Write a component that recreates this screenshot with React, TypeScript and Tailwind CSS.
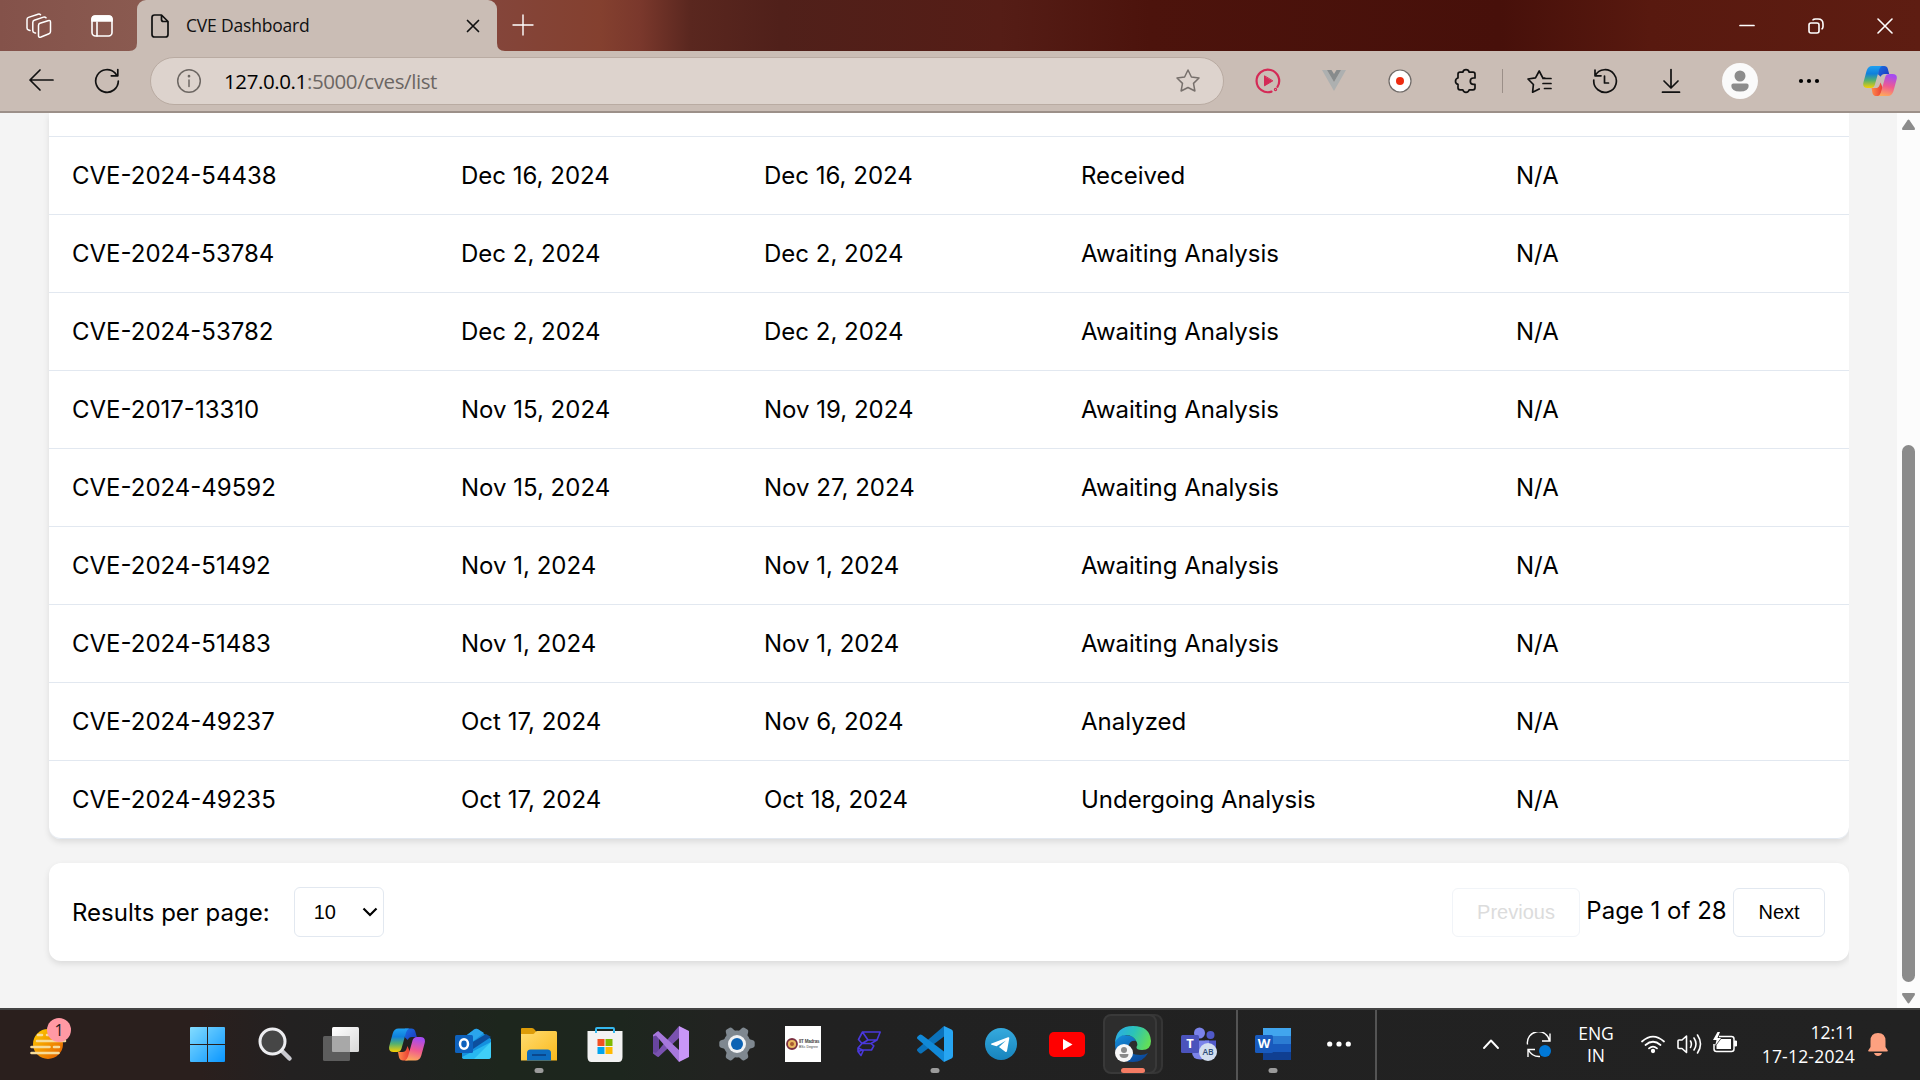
import React from "react";

type P = { children?: React.ReactNode; className?: string };

const rows = [
  ["CVE-2024-54438", "Dec 16, 2024", "Dec 16, 2024", "Received", "N/A"],
  ["CVE-2024-53784", "Dec 2, 2024", "Dec 2, 2024", "Awaiting Analysis", "N/A"],
  ["CVE-2024-53782", "Dec 2, 2024", "Dec 2, 2024", "Awaiting Analysis", "N/A"],
  ["CVE-2017-13310", "Nov 15, 2024", "Nov 19, 2024", "Awaiting Analysis", "N/A"],
  ["CVE-2024-49592", "Nov 15, 2024", "Nov 27, 2024", "Awaiting Analysis", "N/A"],
  ["CVE-2024-51492", "Nov 1, 2024", "Nov 1, 2024", "Awaiting Analysis", "N/A"],
  ["CVE-2024-51483", "Nov 1, 2024", "Nov 1, 2024", "Awaiting Analysis", "N/A"],
  ["CVE-2024-49237", "Oct 17, 2024", "Nov 6, 2024", "Analyzed", "N/A"],
  ["CVE-2024-49235", "Oct 17, 2024", "Oct 18, 2024", "Undergoing Analysis", "N/A"],
];

function Slot({ children, className = "w-[66px]" }: P) {
  return <div className={`flex h-full shrink-0 items-center justify-center ${className}`}>{children}</div>;
}

function Line({ size = 24, children, stroke = "#111", sw = 1.6, className = "" }: { size?: number; children: React.ReactNode; stroke?: string; sw?: number; className?: string }) {
  return (
    <svg width={size} height={size} viewBox={`0 0 ${size} ${size}`} fill="none" stroke={stroke} strokeWidth={sw} strokeLinecap="round" strokeLinejoin="round" className={className}>
      {children}
    </svg>
  );
}

function Copilot({ id, w, h }: { id: string; w: number; h: number }) {
  return (
    <svg width={w} height={h} viewBox="0 0 36 32">
      <defs>
        <linearGradient id={id + "a"} x1="0" y1="0" x2="0" y2="1">
          <stop offset="0" stopColor="#1fa0f0" />
          <stop offset=".35" stopColor="#0f80dc" />
          <stop offset=".65" stopColor="#54b070" />
          <stop offset="1" stopColor="#f8d000" />
        </linearGradient>
        <linearGradient id={id + "b"} x1="0.3" y1="0" x2="0.1" y2="1">
          <stop offset="0" stopColor="#a64cf0" />
          <stop offset=".5" stopColor="#f05a90" />
          <stop offset="1" stopColor="#ffb056" />
        </linearGradient>
        <linearGradient id={id + "c"} x1="0" y1="0" x2="1" y2="1">
          <stop offset="0" stopColor="#1a70e0" />
          <stop offset="1" stopColor="#1c35c0" />
        </linearGradient>
        <linearGradient id={id + "d"} x1="0" y1="0" x2="1" y2="0">
          <stop offset="0" stopColor="#ff8a4a" />
          <stop offset="1" stopColor="#e83a34" />
        </linearGradient>
      </defs>
      <path d="M16 0h6.500q3 0 3.800 3l1.500 5.500h-5q-3 0-4 3L16 9z" fill={`url(#${id}c)`} />
      <path d="M9 23.500h4.500q3 0 4-3l1-3 2.500 6-2.500 8.500H14q-3 0-4-3z" fill={`url(#${id}d)`} />
      <path d="M9.500 0H20q-2 1-3 4l-4.500 16q-1 3.500-4.500 3.500H4.500Q-1 23.500.3 17.500L3.700 5Q5.200 0 9.500 0z" fill={`url(#${id}a)`} />
      <path d="M26.500 32H16q2-1 3-4l4.500-16q1-3.500 4.500-3.500h3.500q5.500 0 4.200 6L32.300 27q-1.500 5-5.800 5z" fill={`url(#${id}b)`} />
    </svg>
  );
}

function TitleBar() {
  return (
    <div className="flex h-[51px] shrink-0 bg-[linear-gradient(90deg,#84524a_0px,#8a5a50_137px,#84453a_497px,#84402f_600px,#7a382c_640px,#5a271f_690px,#50201a_780px,#551d16_1000px,#4c130c_1150px,#47100a_1500px,#58190f_1650px,#5e1d12_1920px)]">
      <div className="flex w-[137px] items-center pl-[7px]">
        <Slot className="w-[64px]">
          <Line size={26} stroke="#fff" sw={1.5}>
            <path d="M12.500 12.500q0-1.600 1.500-2.200l8-2.600q2.500-.7 2.500 1.500v9.300q0 1.600-1.500 2.200l-8 3.300q-2.500.9-2.500-1.300z" />
            <path d="M9.500 20l-1-.2q-1.700-.4-1.700-2V9.500q0-1.600 1.500-2.200l9.200-3.200q1.500-.5 2.500.7" />
            <path d="M4 17.500l-1.500-.5Q1 16.500 1 15V6.500Q1 5 2.500 4.400L12 1.200q1.500-.5 2.500.5" />
          </Line>
        </Slot>
        <Slot className="w-[62px]">
          <Line size={24} stroke="#fff" sw={1.6}>
            <rect x="2" y="2" width="20" height="20" rx="3.500" />
            <path d="M2 7V5q0-3 3-3h14q3 0 3 3v2z" fill="#fff" />
            <path d="M7 8v14" />
          </Line>
        </Slot>
      </div>
      <div className="relative flex w-[360px] items-center rounded-t-[9px] bg-[#cabdb5] pl-[14px] pr-[16px]">
        <svg className="absolute -left-[8px] bottom-0" width="8" height="8"><path d="M8 0v8H0q8 0 8-8z" fill="#cabdb5" /></svg>
        <svg className="absolute -right-[8px] bottom-0" width="8" height="8"><path d="M0 0v8h8Q0 8 0 0z" fill="#cabdb5" /></svg>
        <svg width="18" height="24" viewBox="0 0 18 24" fill="none" stroke="#111" strokeWidth="1.7" strokeLinejoin="round" className="mt-px">
          <path d="M3.500 1h7L17 7.500v13q0 2.500-2.500 2.500h-11Q1 23 1 20.500v-17Q1 1 3.500 1zM10.500 1v4.500q0 2 2 2H17" />
        </svg>
        <span className="ml-[17px] flex-1 whitespace-nowrap font-['Open_Sans'] text-[17.500px] tracking-[-0.190px] text-[#111]">CVE Dashboard</span>
        <Line size={16} sw={1.7}><path d="M2.500 2.500l11 11M13.500 2.500l-11 11" /></Line>
      </div>
      <Slot className="w-[52px]"><Line size={22} stroke="#fff" sw={1.4} className="-mt-px"><path d="M11 1v20M1 11h20" /></Line></Slot>
      <div className="flex-1" />
      <Slot className="w-[69px]"><Line size={16} stroke="#fff" sw={1.7}><path d="M1 7.500h14" /></Line></Slot>
      <Slot className="w-[69px]">
        <Line size={16} stroke="#fff" sw={1.6}>
          <rect x="1" y="5" width="10" height="10" rx="2" />
          <path d="M5 1.800Q5.500 1 7.500 1h2.500q5 0 5 5v2.500q0 1.500-1 2.300" />
        </Line>
      </Slot>
      <Slot className="mr-px w-[69px]"><Line size={16} stroke="#fff" sw={1.6}><path d="M1 1l14 14M15 1L1 15" /></Line></Slot>
    </div>
  );
}

function Toolbar() {
  return (
    <div className="flex h-[62px] shrink-0 items-center border-b-2 border-[#9c9089] bg-[#cabdb5] pl-[8px]">
      <Slot><Line size={26} sw={1.7}><path d="M25 12H2M12 2L2 12l10 10" /></Line></Slot>
      <Slot><Line size={26} sw={1.7}><path d="M24.300 13a11.300 11.300 0 1 1-3.100-7.800L23 7.500M23.800 1.500v6.300h-6.500" /></Line></Slot>
      <div className="ml-[10px] flex h-[48px] w-[1074px] shrink-0 items-center rounded-full border border-[#b9aba2] bg-[#ddd3cd] pl-[25px] pr-[22px]">
        <Line size={26} stroke="#6d6763" sw={1.5}><circle cx="13" cy="13" r="11.300" /><path d="M13 12v6.500" /><circle cx="13" cy="8.200" r=".6" fill="#6d6763" /></Line>
        <span className="ml-[22px] flex-1 whitespace-nowrap font-['Open_Sans'] text-[20.500px] tracking-[-0.400px] text-[#6b6663]"><span className="text-black">127.0.0.1</span>:5000/cves/list</span>
        <Line size={26} stroke="#77706c" sw={1.5}><path d="M13 2l3.400 7 7.600 1-5.500 5.400 1.400 7.600-6.900-3.500L6.100 23l1.400-7.600L2 10l7.600-1z" /></Line>
      </div>
      <div className="w-[11px]" />
      <Slot>
        <Line size={26} stroke="#d42a56" sw={2.2}>
          <path d="M16.500 23.600A11.300 11.300 0 1 1 22.500 18.800" />
          <circle cx="20.500" cy="21.500" r=".6" />
          <path d="M9.500 8.200v9.600l8-4.800z" fill="#d42a56" strokeWidth="1" />
        </Line>
      </Slot>
      <Slot>
        <svg width="24" height="22" viewBox="0 0 24 22"><path d="M0 0h5l7 12 7-12h5L12 21z" fill="#adb0b0" /><path d="M5 0h4.500L12 4l2.500-4H19l-7 12z" fill="#878b8c" /></svg>
      </Slot>
      <Slot>
        <svg width="24" height="24"><circle cx="12" cy="12" r="11" fill="#fff" stroke="#6f6a67" strokeWidth="1.200" /><circle cx="12" cy="12" r="4" fill="#ee2b10" /></svg>
      </Slot>
      <Slot>
        <Line size={26} sw={1.7}>
          <path d="M7 4.200h2.800a3.300 3.300 0 0 1 6.400 0H20q2 0 2 2V10h-1.500a3.200 3.200 0 0 0 0 6.400H22v3.400q0 2-2 2h-3.800a3.300 3.300 0 0 1-6.400 0H7q-2 0-2-2V16.400a3.300 3.300 0 0 1 0-6.400V6.200q0-2 2-2z" />
        </Line>
      </Slot>
      <Slot className="w-[7px]"><div className="h-6 w-[1.500px] bg-[#9b8f88]" /></Slot>
      <Slot className="-ml-px w-[67px]">
        <Line size={26} sw={1.7}>
          <path d="M13.200 21L6.600 24.200l.8-7.700L2 11l7.500-1.200L13.200 3l3.600 6.800 2 .3M17 10.500h8M17 15.500h8M18.500 20.500H25" />
        </Line>
      </Slot>
      <Slot>
        <Line size={26} sw={1.700}>
          <path d="M3 2v5.800h6M3.200 7.500A11.300 11.300 0 1 1 1.800 12M12.500 8v7h4" />
        </Line>
      </Slot>
      <Slot><Line size={26} sw={1.7}><path d="M13 1.500v18M6 13l7 7 7-7M4.500 24.200h17" /></Line></Slot>
      <Slot className="w-[72px]">
        <svg width="36" height="36"><circle cx="18" cy="18" r="18" fill="#fafafa" /><circle cx="18" cy="13" r="5.500" fill="#8c8c8c" /><path d="M11.500 20.500h13q2.200 0 2.200 2.200 0 5.800-8.700 5.800t-8.700-5.800q0-2.200 2.200-2.200z" fill="#8c8c8c" /></svg>
      </Slot>
      <Slot><svg width="22" height="6"><circle cx="3" cy="3" r="2.100" /><circle cx="11" cy="3" r="2.100" /><circle cx="19" cy="3" r="2.100" /></svg></Slot>
      <Slot className="w-[76px]"><Copilot id="tc" w={34} h={30} /></Slot>
    </div>
  );
}

function Content() {
  return (
    <div className="flex h-[895px] shrink-0 bg-[#f4f4f4] font-['Inter'] text-2xl text-black">
      <div className="w-[1849px] overflow-hidden pl-[49px] [clip-path:inset(0_-10px_0_0)]">
        <div className="h-[726px] rounded-b-xl bg-white shadow-[0_3px_6px_rgba(0,0,0,0.1)]">
          <div className="h-6 border-b border-[#e2e8f0]" />
          {rows.map((r) => (
            <div key={r[0]} className="grid h-[78px] grid-cols-[388px_303px_317px_435px_357px] items-center whitespace-nowrap border-b border-[#e2e8f0] pt-px last:rounded-b-xl">
              {r.map((c, i) => <div key={i} className="pl-6 first:pl-[23px]">{c}</div>)}
            </div>
          ))}
        </div>
        <div className="mt-6 flex h-[98px] items-center justify-between rounded-xl bg-white pl-[23px] pr-6 shadow-[0_3px_6px_rgba(0,0,0,0.1)]">
          <div className="flex items-center">
            <span className="mt-px">Results per page:</span>
            <div className="ml-6 flex h-[50px] w-[90px] items-center justify-between rounded-md border border-[#e2e8f0] pl-[19px] pr-[5px] font-['Liberation_Sans'] text-xl">
              <span>10</span>
              <svg width="16" height="10" viewBox="0 0 16 10" fill="none" stroke="#000" strokeWidth="2.200"><path d="M1.500 1.500L8 8l6.500-6.500" /></svg>
            </div>
          </div>
          <div className="flex items-center">
            <div className="mt-px flex h-[49px] w-[128px] items-center justify-center rounded-md border border-[#f1f4f8] pb-px font-['Liberation_Sans'] text-xl text-[#dcdcdc]">Previous</div>
            <span className="-mt-[3px] w-[153px] text-center">Page 1 of 28</span>
            <div className="mt-px flex h-[49px] w-[92px] items-center justify-center rounded-md border border-[#e2e8f0] pb-px font-['Liberation_Sans'] text-xl">Next</div>
          </div>
        </div>
      </div>
      <div className="w-[48px]" />
      <div className="flex w-[23px] flex-col items-center bg-[#fcfcfc] pr-px pt-[6px]">
        <svg width="15" height="12" viewBox="0 0 15 12"><path d="M6.500 1.200q1-1.200 2 0l5.300 7.800q.8 2-.8 2H2q-1.600 0-.8-2z" fill="#8b8b8b" /></svg>
        <div className="mt-[314px] h-[537px] w-[13px] rounded-full bg-[#8b8b8b]" />
        <svg className="mt-[10px]" width="15" height="12" viewBox="0 0 15 12"><path d="M6.500 10.800q1 1.200 2 0L13.800 3q.8-2-.8-2H2Q.4 1 1.200 3z" fill="#8b8b8b" /></svg>
      </div>
    </div>
  );
}

function AppIcon({ children, running, className = "w-[66px]" }: P & { running?: boolean }) {
  return (
    <div className={`relative flex h-full shrink-0 items-center justify-center pb-[2px] ${className}`}>
      {children}
      {running && <div className="absolute bottom-[7px] left-1/2 h-[5px] w-[9px] -translate-x-1/2 rounded-full bg-[#9b9b9b]" />}
    </div>
  );
}

function Taskbar() {
  return (
    <div className="flex h-[72px] shrink-0 border-t-2 border-[#444443] bg-[linear-gradient(90deg,#2a1f1d_0px,#2a1f1d_200px,#232121_290px,#212221_400px,#1d261d_500px,#1d261e_620px,#222321_720px,#212121_800px,#222222_1920px)] text-white">
      <div className="w-[174px] pl-[29px] pt-[7px]">
        <div className="relative h-[44px] w-[44px]">
          <svg width="44" height="44" viewBox="0 0 44 44">
            <defs><linearGradient id="sun" x1="0" y1="0" x2="1" y2="1"><stop offset="0" stopColor="#ffd000" /><stop offset="1" stopColor="#e45a00" /></linearGradient></defs>
            <circle cx="19" cy="27" r="15" fill="url(#sun)" />
            <g stroke="#f7dc9a" strokeWidth="2.600" strokeLinecap="round"><path d="M9 18h4M18 18h10M8 24h28M2.500 30h18M25 30h5M2.500 36h27" /></g>
          </svg>
          <div className="absolute left-[18px] top-[1px] flex h-6 w-6 items-center justify-center rounded-full bg-[#ff99a4] font-['Open_Sans'] text-base text-[#1b1b1b]">1</div>
        </div>
      </div>
      <AppIcon className="w-[68px] pr-[2px]">
        <svg width="35" height="35" className="mt-px">
          <defs><linearGradient id="win" x1="0" y1="0" x2="1" y2="1"><stop offset="0" stopColor="#83dcff" /><stop offset="1" stopColor="#0a96ff" /></linearGradient></defs>
          <path d="M1 0h16v17H0V1q0-1 1-1zM18 0h16q1 0 1 1v16H18zM0 18h17v17H1q-1 0-1-1zM18 18h17v16q0 1-1 1H18z" fill="url(#win)" />
        </svg>
      </AppIcon>
      <AppIcon>
        <svg width="36" height="36" viewBox="0 0 36 36"><path d="M24.500 24.500l8 8" stroke="#c9c9cf" strokeWidth="4.500" strokeLinecap="round" /><circle cx="15.500" cy="15.500" r="12.500" fill="#464646" stroke="#ededf0" strokeWidth="3" /></svg>
      </AppIcon>
      <AppIcon>
        <svg width="36" height="36" viewBox="0 0 36 36">
          <defs><linearGradient id="tv" x1="0" y1="0" x2="1" y2="1"><stop offset="0" stopColor="#fff" /><stop offset="1" stopColor="#d8d8d8" /></linearGradient></defs>
          <rect x="9" y="1" width="27" height="25" rx="1.500" fill="url(#tv)" /><rect x="0" y="10" width="27" height="25" rx="1.500" fill="#727272" fillOpacity=".75" /><path d="M9 10h18v16H10.500q-1.500 0-1.500-1.500z" fill="#a8a8a8" />
        </svg>
      </AppIcon>
      <AppIcon><Copilot id="bc" w={36} h={33} /></AppIcon>
      <AppIcon>
        <svg width="36" height="34" viewBox="0 0 36 34">
          <path d="M7 12L19 2.500q2-1.300 4 0L36 12v17q0 3-3 3H10q-3 0-3-3z" fill="#1490df" />
          <path d="M9 10l10.500-7.500q2-1.300 4 0L29 6 13 18z" fill="#2aa5ec" /><path d="M36 10L18 22l-2-6L31 7z" fill="#0d4f9e" />
          <path d="M36 15v14q0 3-3 3H9q-2 0-2-2z" fill="#28b8f0" /><path d="M36 15v14q0 3-3 3H19z" fill="#48d8fb" opacity=".7" />
          <rect x="0" y="8" width="18" height="18" rx="1.500" fill="#0e62bd" /><ellipse cx="9" cy="17" rx="4" ry="4.700" fill="none" stroke="#fff" strokeWidth="2.500" />
        </svg>
      </AppIcon>
      <AppIcon running>
        <svg width="36" height="36" viewBox="0 0 36 36">
          <defs><linearGradient id="fd" x1="0" y1="0" x2="1" y2="1"><stop offset="0" stopColor="#ffdc70" /><stop offset="1" stopColor="#fbb91c" /></linearGradient></defs>
          <path d="M0 3q0-1 1-1h10q1.500 0 3 2l1.500 2v7H0z" fill="#dd9c08" /><path d="M0 8h12q1 0 2-1.500T16 5h18.500Q36 5 36 6.500V34.500H0z" fill="url(#fd)" />
          <path d="M6 34.500v-7.500q0-3.500 3.500-3.500h17q3.500 0 3.500 3.500v7.500z" fill="#0d6cbf" /><path d="M11 29h14" stroke="#0a478d" strokeWidth="2" />
        </svg>
      </AppIcon>
      <AppIcon>
        <svg width="36" height="36" viewBox="0 0 36 36"><path d="M9 9V3q0-1 1-1h16q1 0 1 1v6" fill="none" stroke="#35b8ee" strokeWidth="2" /><path d="M.500 5h35v26q0 5-4 5h-27q-4 0-4-5z" fill="#f2f2f2" /><path d="M9 4v3M27 4v3" stroke="#35b8ee" strokeWidth="2" /><path d="M10.500 13h7v7h-7z" fill="#f25022" /><path d="M18.500 13h7v7h-7z" fill="#7fba00" /><path d="M10.500 21h7v7h-7z" fill="#00a4ef" /><path d="M18.500 21h7v7h-7z" fill="#ffb900" /></svg>
      </AppIcon>
      <AppIcon>
        <svg width="36" height="36" viewBox="0 0 36 36"><path d="M0 9l6-4v26l-6-4z" fill="#68459f" /><path d="M0 26l3 1L26 0v12L6 30.500q-1 .8-2 0l-4-3z" fill="#7a52b0" /><path d="M0 9l4-3.300q1-.8 2 0L26 24v12L3 9.500l-3 1z" fill="#a778dc" /><path d="M26 0l10 5v26l-10 5z" fill="#c896f6" /></svg>
      </AppIcon>
      <AppIcon>
        <svg width="36" height="36" viewBox="0 0 36 36">
          <g fill="#7f8890">
            <circle cx="18" cy="18" r="13.500" />
            {[30, 90, 150, 210, 270, 330].map((a) => <path key={a} transform={`rotate(${a} 18 18)`} d="M12.500 8l1.800-6q.4-1.500 2-1.700h3.400q1.600.2 2 1.700l1.800 6z" />)}
          </g>
          <circle cx="18" cy="18" r="9" fill="#f0f2f4" /><circle cx="18" cy="18" r="6" fill="#0b62b4" />
        </svg>
      </AppIcon>
      <AppIcon>
        <div className="flex h-9 w-9 items-center bg-white">
          <svg width="12" height="12" className="ml-px shrink-0"><circle cx="6" cy="6" r="5" fill="#e8b860" stroke="#7b3040" strokeWidth="1.800" /><circle cx="6" cy="6" r="2" fill="#a85a30" /></svg>
          <div className="ml-px whitespace-nowrap font-['Liberation_Sans'] leading-[4px] text-[#444]"><div className="text-[4.500px] font-bold tracking-[-0.200px]">IIT Madras</div><div className="mt-px text-[3.500px]">BSc Degree</div></div>
        </div>
      </AppIcon>
      <AppIcon>
        <svg width="24" height="26" viewBox="0 0 24 26" fill="none" stroke="#4a38dc" strokeWidth="1.600" strokeLinejoin="round"><path d="M5.500 1H23.200L20 9H11L5.500 1L1.500 8.500 5 12.500h9L20 9M11 9L5 12.500M14 12.500l2.800 2.300L14.500 19H5.500L1 17l4-4.500M5.500 19L1 20.500v-3.500M1 20.500L4 24.500 6.500 19" /></svg>
      </AppIcon>
      <AppIcon running>
        <svg width="36" height="36" viewBox="0 0 36 36"><path d="M27 0v10.500L5 27q-1.500 1-2.700 0L.6 25.300q-1.200-1.300 0-2.500z" fill="#0b72bb" /><path d="M27 36V25.500L5 9q-1.500-1-2.700 0L.6 10.600q-1.200 1.300 0 2.500z" fill="#1189d8" /><path d="M27 0l7.500 3.600Q36 4.300 36 6v24q0 1.700-1.500 2.400L27 36z" fill="#27a5f2" /></svg>
      </AppIcon>
      <AppIcon>
        <svg width="32" height="32" viewBox="0 0 32 32"><defs><linearGradient id="tg" x1="0" y1="0" x2="0" y2="1"><stop offset="0" stopColor="#35aade" /><stop offset="1" stopColor="#1784bd" /></linearGradient></defs><circle cx="16" cy="16" r="16" fill="url(#tg)" /><path d="M6.500 15.500L23 9.300q1.500-.4 1.300 1L22 23q-.4 1.500-1.800.7L14 19l7-6.500-9.500 5.800-5-1.600q-1.200-.6 0-1.200z" fill="#fff" /></svg>
      </AppIcon>
      <AppIcon>
        <svg width="36" height="25" viewBox="0 0 36 25"><rect width="36" height="25" rx="5" fill="#f00" /><path d="M14 7v11l9.500-5.500z" fill="#fff" /></svg>
      </AppIcon>
      <AppIcon>
        <div className="absolute left-[10px] top-[4px] h-[60px] w-[53px] rounded-lg border-2 border-[#353535] bg-[#292929]" />
        <div className="absolute left-[3px] top-[4px] h-[60px] w-[54px] rounded-lg border-2 border-[#393939] bg-[#2d2d2d]" />
        <div className="absolute bottom-[7px] left-[21px] h-[5px] w-6 rounded-full bg-[#f57c64]" />
        <svg width="36" height="36" viewBox="0 0 36 36" className="relative">
          <defs>
            <linearGradient id="eg" x1="0" y1="0.200" x2="1" y2="0.500"><stop offset="0" stopColor="#2baae8" /><stop offset=".5" stopColor="#2bc3b8" /><stop offset="1" stopColor="#62de58" /></linearGradient>
            <linearGradient id="eb" x1="0" y1="0" x2="0.600" y2="1"><stop offset="0" stopColor="#1690dc" /><stop offset="1" stopColor="#0b4a9c" /></linearGradient>
          </defs>
          <path d="M0 18Q0 9 9 9q10 0 12 6-6-1-7.500 5 0 9 12 9 5 0 7.500-2-5 9-15 9Q0 36 0 18z" fill="url(#eb)" />
          <path d="M0 17Q1 0 18 0q17 0 18 15 0 9-9 9-6 0-5.500-3 1.500-2 .5-4.500Q19 9 11 9 3 9 0 17z" fill="url(#eg)" />
          <circle cx="9" cy="27" r="9" fill="#f8f8f8" /><circle cx="9" cy="24" r="3" fill="#8a8a8a" /><path d="M4.500 28h9q0 4-4.500 4t-4.500-4z" fill="#8a8a8a" />
        </svg>
      </AppIcon>
      <AppIcon className="w-[68px]">
        <div className="relative -ml-[2px] h-9 w-9">
          <svg width="36" height="36" viewBox="0 0 36 36"><circle cx="18.500" cy="7" r="5.500" fill="#7b83eb" /><circle cx="29.500" cy="9" r="4" fill="#5059c9" /><path d="M24 14.500h11v11q0 5-5.500 5H24z" fill="#5059c9" /><path d="M11 14.500h17v11q0 8-8.500 8T11 26z" fill="#7b83eb" /><rect x="0" y="9" width="18" height="18" rx="1.500" fill="#4b53bc" /></svg>
          <div className="absolute left-0 top-[9px] flex h-[18px] w-[18px] items-center justify-center font-['Open_Sans'] text-[13px] font-bold">T</div>
          <div className="absolute left-[18px] top-[17px] flex h-[18px] w-[18px] items-center justify-center rounded-full bg-[#d3deef] font-['Open_Sans'] text-[8.500px] font-semibold text-[#2f4d77]">AB</div>
        </div>
      </AppIcon>
      <div className="ml-[2px] w-[2px] bg-[#545454]" />
      <AppIcon running className="w-[70px]">
        <div className="relative h-8 w-9">
          <svg width="36" height="32"><path d="M8 0h28v8H8z" fill="#41a5ee" /><path d="M8 8h28v8H8z" fill="#2b7cd3" /><path d="M8 16h28v8H8z" fill="#185abd" /><path d="M8 24h28v8H8z" fill="#103f91" /><rect y="7" width="18" height="18" rx="1.500" fill="#185abd" /></svg>
          <div className="absolute left-0 top-[7px] flex h-[18px] w-[18px] items-center justify-center font-['Open_Sans'] text-[13px] font-bold">W</div>
        </div>
      </AppIcon>
      <AppIcon className="w-[62px]"><svg width="24" height="6" fill="#fff"><circle cx="2.700" cy="3" r="2.600" /><circle cx="12" cy="3" r="2.600" /><circle cx="21.300" cy="3" r="2.600" /></svg></AppIcon>
      <div className="ml-[5px] w-[2px] bg-[#545454]" />
      <div className="flex-1" />
      <Slot className="w-[48px]"><Line size={18} stroke="#fff" sw={1.900} className="-mt-[2px]"><path d="M2 13l7-7.500 7 7.500" /></Line></Slot>
      <Slot className="w-[48px]">
        <svg width="26" height="26" viewBox="0 0 26 26" fill="none" stroke="#fff" strokeWidth="1.400" className="-mt-px"><path d="M1.500 12.500A11 11 0 0 1 23.500 9M24 1.500V9h-8M14 24.500Q6 25 2.500 18M2 25v-7.500h7" /><circle cx="19" cy="19" r="6" fill="#0078d7" stroke="none" /></svg>
      </Slot>
      <div className="flex w-[66px] flex-col items-center justify-center pb-[2px] font-['Open_Sans'] text-[17.500px] leading-[22px]"><span>ENG</span><span>IN</span></div>
      <Slot className="ml-[6px] w-[36px] pb-[2px]">
        <Line size={24} stroke="#fff" sw={1.700}><path d="M1 9.500q11-9.800 22 0M4.500 13q7.500-6.500 15 0M8 16.400q4-3.600 8 0" /><circle cx="12" cy="19" r="1.300" fill="#fff" /></Line>
      </Slot>
      <Slot className="w-[36px] pb-[2px]">
        <Line size={26} stroke="#fff" sw={1.600}><path d="M2 10v6.500q0 1 1 1h3l4.500 4V5L6 9H3q-1 0-1 1zM14.500 10q1.800 3 0 6.500M18 7q4 6 0 12M21.500 4q6 9 0 18" /></Line>
      </Slot>
      <Slot className="w-[36px] pb-[4px]">
        <svg width="26" height="22" viewBox="0 0 26 22"><path d="M7 4.500h12.500q2.500 0 2.500 2.500v10q0 2.500-2.500 2.500h-15Q2 19.500 2 17v-5" fill="none" stroke="#fff" strokeWidth="1.500" /><path d="M9 7h10v10H4.500v-4z" fill="#fff" /><path d="M22.500 9h2v5h-2z" fill="#fff" stroke="#fff" /><path d="M5.500 0L1 8h3.500L3 14l6-8H5.500L8 0z" fill="#fff" /></svg>
      </Slot>
      <div className="flex w-[112px] flex-col items-end justify-center whitespace-nowrap pb-[2px] font-['Open_Sans'] text-[17.500px] leading-6"><span>12:11</span><span className="tracking-[0.200px]">17-12-2024</span></div>
      <Slot className="ml-[13px] w-[20px]">
        <svg width="20" height="24" viewBox="0 0 20 24" fill="#fda180"><path d="M10 0q7.500 0 7.500 8v6l2.300 3.500q.2 1-.8 1H1q-1 0-.8-1L2.500 14V8Q2.500 0 10 0zM6 20h8q-1 3-4 3t-4-3z" /></svg>
      </Slot>
      <div className="w-[32px]" />
    </div>
  );
}

export default function App() {
  return (
    <div className="flex h-[1080px] w-[1920px] flex-col overflow-hidden">
      <TitleBar />
      <Toolbar />
      <Content />
      <Taskbar />
    </div>
  );
}
